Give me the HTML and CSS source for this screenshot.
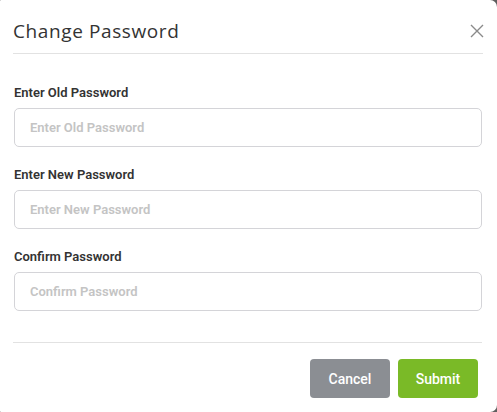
FILE: index.html
```html
<!DOCTYPE html>
<html>
<head>
<meta charset="utf-8">
<link rel="stylesheet" href="styles.css">
</head>
<body>
<div class="modal">
  <div class="modal-header">
    <h2 class="modal-title">Change Password</h2>
    <button class="close" aria-label="Close">
      <svg width="14" height="14" viewBox="0 0 14 14"><path d="M1 1L13 13M13 1L1 13" stroke="#8a8a8a" stroke-width="1.4" fill="none"/></svg>
    </button>
  </div>
  <div class="modal-body">
    <div class="field">
      <label class="label">Enter Old Password</label>
      <input class="input" type="password" placeholder="Enter Old Password">
    </div>
    <div class="field">
      <label class="label">Enter New Password</label>
      <input class="input" type="password" placeholder="Enter New Password">
    </div>
    <div class="field">
      <label class="label">Confirm Password</label>
      <input class="input" type="password" placeholder="Confirm Password">
    </div>
  </div>
  <div class="modal-footer">
    <button class="btn btn-cancel">Cancel</button>
    <button class="btn btn-submit">Submit</button>
  </div>
</div>
</body>
</html>
```
FILE: styles.css
```css
* { box-sizing: border-box; }
html, body { margin: 0; padding: 0; }
body {
  background: #5e5e5e;
  width: 497px;
  height: 412px;
  overflow: hidden;
  font-family: Roboto, "Liberation Sans", sans-serif;
}
.modal {
  width: 497px;
  height: 412px;
  background: #fff;
  border-radius: 1px 7px 7px 1px;
  display: flex;
  flex-direction: column;
}
.modal-header {
  margin: 0 14px 0 13px;
  height: 54px;
  border-bottom: 1px solid #e2e2e2;
  display: flex;
  align-items: center;
  justify-content: space-between;
  padding-top: 8px;
}
.modal-title {
  margin: 0;
  font-family: "Open Sans", sans-serif;
  font-weight: 400;
  font-size: 19px;
  letter-spacing: 0.6px;
  color: #333;
}
.close {
  border: 0;
  background: none;
  padding: 0;
  width: 14px;
  height: 14px;
  display: flex;
  margin-right: -1px;
}
.modal-body {
  padding: 31px 15px 0 14px;
  display: flex;
  flex-direction: column;
  gap: 20px;
}
.field { display: flex; flex-direction: column; }
.label {
  font-size: 13px;
  line-height: 16px;
  font-weight: 600;
  color: #333;
  margin-bottom: 7px;
}
.input {
  height: 39px;
  width: 100%;
  border: 1px solid #d4d4d8;
  border-radius: 5px;
  padding: 0 15px;
  font-family: Roboto, sans-serif;
  font-size: 13px;
  font-weight: 600;
  color: #333;
  outline: none;
}
.input::placeholder { color: #c4c4c4; }
.modal-footer {
  margin: 31px 15px 0 13px;
  border-top: 1px solid #e2e2e2;
  padding-top: 16px;
  display: flex;
  justify-content: flex-end;
  gap: 8px;
  padding-right: 4px;
}
.btn {
  width: 80px;
  height: 39px;
  border: 0;
  border-radius: 4px;
  color: #fff;
  font-family: Roboto, sans-serif;
  font-size: 14px;
  font-weight: 500;
}
.btn-cancel { background: #8b8e93; }
.btn-submit { background: #7aba27; }
```
